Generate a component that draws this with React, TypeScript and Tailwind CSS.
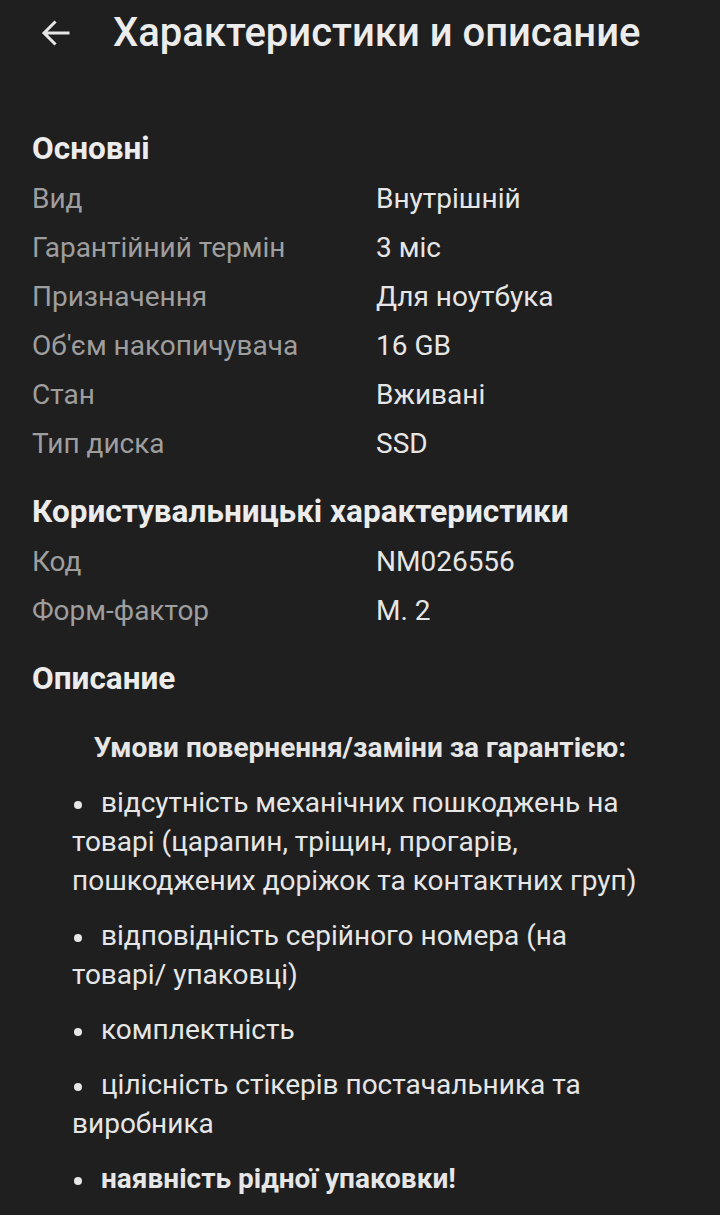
import React from "react";

const basic = [
  ["Вид", "Внутрішній"],
  ["Гарантійний термін", "3 міс"],
  ["Призначення", "Для ноутбука"],
  ["Об'єм накопичувача", "16 GB"],
  ["Стан", "Вживані"],
  ["Тип диска", "SSD"],
];

const custom = [
  ["Код", "NM026556"],
  ["Форм-фактор", "M. 2"],
];

function Rows({ rows }: { rows: string[][] }) {
  return (
    <div className="flex flex-col">
      {rows.map(([k, v]) => (
        <div key={k} className="flex h-[49px] items-center text-[28px]">
          <div className="w-[344px] text-[#9e9e9e]">{k}</div>
          <div className="text-[#e6e6e6]">{v}</div>
        </div>
      ))}
    </div>
  );
}

function Bullet({ children }: { children: React.ReactNode }) {
  return (
    <p className="mt-[16px]">
      <span className="inline-block w-[29px] align-middle">
        <span className="ml-[2px] block h-2 w-2 rounded-full bg-[#e6e6e6]" />
      </span>
      {children}
    </p>
  );
}

export default function App() {
  return (
    <div className="min-h-[1215px] w-[720px] bg-[#1f1f1f] text-[#e6e6e6] font-['Roboto',sans-serif] overflow-hidden">
      <div className="flex h-[66px] items-center">
        <div className="w-[113px] pl-[38px]">
          <svg width="36" height="36" viewBox="0 0 24 24" fill="none" stroke="#e6e6e6" strokeWidth="2" strokeLinecap="square">
            <path d="M20 12H5M11 5l-7 7 7 7" />
          </svg>
        </div>
        <h1 className="text-[40px] font-medium text-[#ececec]">Характеристики и описание</h1>
      </div>

      <div className="px-8 pt-[58px]">
        <h2 className="h-[50px] text-[31.5px] font-bold leading-[50px] text-[#ececec]">Основні</h2>
        <Rows rows={basic} />
        <h2 className="mt-[19px] h-[50px] text-[31.5px] font-bold leading-[50px] text-[#ececec]">Користувальницькі характеристики</h2>
        <Rows rows={custom} />
        <h2 className="mt-[19px] h-[50px] text-[31.5px] font-bold leading-[50px] text-[#ececec]">Описание</h2>

        <div className="pl-10 pr-[38px] pt-[24px] text-[28px] leading-[39px] text-[#e6e6e6]">
          <p className="-ml-10 -mr-[38px] text-center font-bold">Умови повернення/заміни за гарантією:</p>
          <Bullet>відсутність механічних пошкоджень на товарі (царапин, тріщин, прогарів, пошкоджених доріжок та контактних груп)</Bullet>
          <Bullet>відповідність серійного номера (на товарі/ упаковці)</Bullet>
          <Bullet>комплектність</Bullet>
          <Bullet>цілісність стікерів постачальника та виробника</Bullet>
          <Bullet>
            <span className="font-bold">наявність рідної упаковки!</span>
          </Bullet>
        </div>
      </div>
    </div>
  );
}
